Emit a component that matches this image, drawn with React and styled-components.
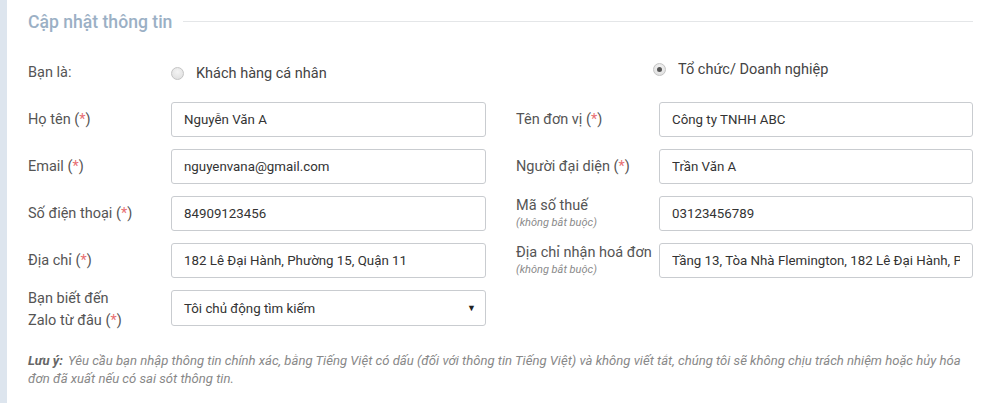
import React from 'react';
import styled, { createGlobalStyle } from 'styled-components';

const GlobalStyle = createGlobalStyle`
    html, body {
        margin: 0;
        padding: 0;
        background: #fff;
    }
    body {
        font-family: Roboto, "Noto Sans", Arial, sans-serif;
    }
`;

const rows = [
    [
        { label: 'Họ tên', required: true, value: 'Nguyễn Văn A' },
        { label: 'Tên đơn vị', required: true, value: 'Công ty TNHH ABC' },
    ],
    [
        { label: 'Email', required: true, value: 'nguyenvana@gmail.com' },
        { label: 'Người đại diện', required: true, value: 'Trần Văn A' },
    ],
    [
        { label: 'Số điện thoại', required: true, value: '84909123456' },
        { label: 'Mã số thuế', optional: true, value: '03123456789' },
    ],
    [
        { label: 'Địa chỉ', required: true, value: '182 Lê Đại Hành, Phường 15, Quận 11' },
        { label: 'Địa chỉ nhận hoá đơn', optional: true, value: 'Tầng 13, Tòa Nhà Flemington, 182 Lê Đại Hành, Phường 15, Quận 11' },
    ],
];

function Star() {
    return <>(<Asterisk>*</Asterisk>)</>;
}

function Field({ label, required, optional, value }) {
    return (
        <FieldStyled>
            <Label>
                <span>{label}{required && <> <Star /></>}</span>
                {optional && <Hint>(không bắt buộc)</Hint>}
            </Label>
            <Input readOnly value={value} />
        </FieldStyled>
    );
}

function App() {
    return (
        <>
            <GlobalStyle />
            <Panel>
                <TitleRow>
                    <Title>Cập nhật thông tin</Title>
                    <Rule />
                </TitleRow>

                <RadioRow>
                    <RadioCell>
                        <Label>Bạn là:</Label>
                        <RadioOption>
                            <Radio />
                            <span>Khách hàng cá nhân</span>
                        </RadioOption>
                    </RadioCell>
                    <RadioCell>
                        <Label />
                        <RadioOption raised>
                            <Radio checked />
                            <span>Tổ chức/ Doanh nghiệp</span>
                        </RadioOption>
                    </RadioCell>
                </RadioRow>

                <FormGrid>
                    {rows.map((row, i) => (
                        <React.Fragment key={i}>
                            <Field {...row[0]} />
                            <Field {...row[1]} />
                        </React.Fragment>
                    ))}
                    <FieldStyled>
                        <Label tall>
                            <span>Bạn biết đến</span>
                            <span>Zalo từ đâu <Star /></span>
                        </Label>
                        <SelectBox>
                            <span>Tôi chủ động tìm kiếm</span>
                            <Caret>▼</Caret>
                        </SelectBox>
                    </FieldStyled>
                </FormGrid>

                <Note>
                    <strong>Lưu ý:</strong> Yêu cầu bạn nhập thông tin chính xác, bằng Tiếng Việt có dấu (đối với thông tin Tiếng Việt) và không viết tắt, chúng tôi sẽ không chịu trách nhiệm hoặc hủy hóa đơn đã xuất nếu có sai sót thông tin.
                </Note>
            </Panel>
        </>
    );
}

const Panel = styled.div`
    box-sizing: border-box;
    height: 403px;
    border-left: 7px solid #dde5ee;
    padding: 11px 23px 0 21px;
    overflow: hidden;
`;

const TitleRow = styled.div`
    display: flex;
    align-items: center;
    height: 22px;
`;

const Title = styled.h2`
    margin: 0;
    font-size: 17.6px;
    font-weight: 500;
    color: #9bb0c5;
    white-space: nowrap;
`;

const Rule = styled.div`
    flex: 1;
    height: 1px;
    margin: -2px 0 0 11px;
    background: #e4e6e8;
`;

const RadioRow = styled.div`
    display: grid;
    grid-template-columns: 458px 457px;
    column-gap: 30px;
    margin-top: 29px;
    height: 22px;
`;

const RadioCell = styled.div`
    display: flex;
    align-items: center;
`;

const RadioOption = styled.label`
    display: flex;
    align-items: center;
    gap: 12px;
    font-size: 14.5px;
    color: #444;
    margin-top: ${(p) => (p.raised ? '-8px' : '0')};
    margin-left: ${(p) => (p.raised ? '-6px' : '0')};
`;

const Radio = styled.span`
    box-sizing: border-box;
    width: 13px;
    height: 13px;
    border-radius: 50%;
    border: 1px solid #c4c4c4;
    background: radial-gradient(circle at 50% 35%, #f4f4f4, #dcdcdc);
    display: flex;
    align-items: center;
    justify-content: center;
    &::after {
        content: '';
        width: 5px;
        height: 5px;
        border-radius: 50%;
        background: ${(p) => (p.checked ? '#555' : 'transparent')};
    }
`;

const FormGrid = styled.div`
    display: grid;
    grid-template-columns: 458px 457px;
    column-gap: 30px;
    row-gap: 12px;
    margin-top: 18px;
`;

const FieldStyled = styled.div`
    display: flex;
    align-items: center;
`;

const Label = styled.div`
    flex: 0 0 143px;
    display: flex;
    flex-direction: column;
    font-size: 14.5px;
    line-height: ${(p) => (p.tall ? '22px' : '16px')};
    margin: ${(p) => (p.tall ? '-2px 0 -6px' : '0')};
    color: #555;
`;

const Asterisk = styled.span`
    color: #e86f73;
`;

const Hint = styled.span`
    font-size: 11px;
    font-style: italic;
    color: #8a8a8a;
    line-height: 15px;
    margin-top: 1px;
`;

const Input = styled.input`
    box-sizing: border-box;
    width: 315px;
    height: 35px;
    padding: 0 12px;
    border: 1px solid #c9ccd0;
    border-radius: 3px;
    font-family: Roboto, "Noto Sans", Arial, sans-serif;
    font-size: 13.3px;
    color: #333;
    background: #fff;
    outline: none;
`;

const SelectBox = styled.div`
    box-sizing: border-box;
    width: 315px;
    height: 36px;
    padding: 0 9px 0 12px;
    display: flex;
    align-items: center;
    justify-content: space-between;
    border: 1px solid #c9ccd0;
    border-radius: 3px;
    font-size: 13.3px;
    color: #333;
`;

const Caret = styled.span`
    font-size: 9px;
    color: #222;
`;

const Note = styled.p`
    margin: 26px 0 0;
    font-size: 13.1px;
    line-height: 18px;
    font-style: italic;
    color: #888;
    strong {
        color: #666;
        font-weight: 700;
        margin-right: 2px;
    }
`;

export default App;
